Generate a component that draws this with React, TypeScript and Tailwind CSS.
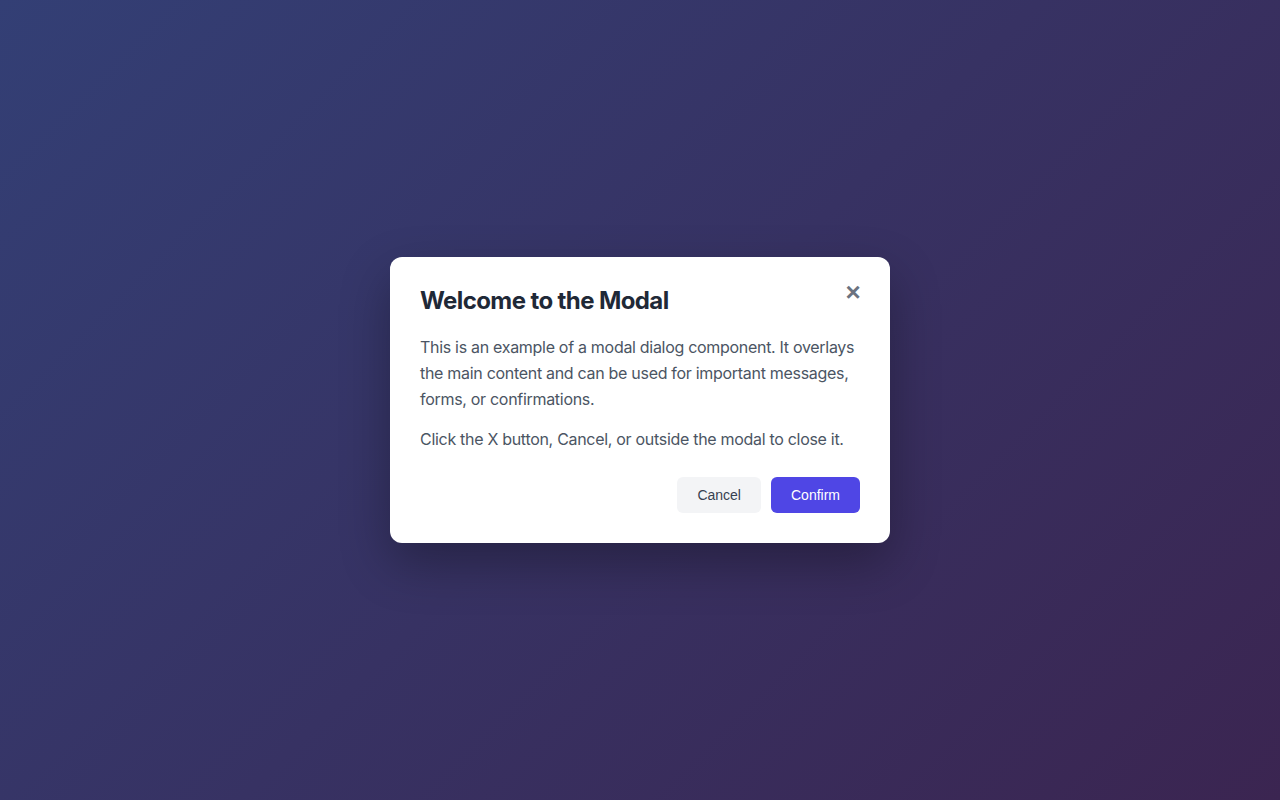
import React from 'react';

const App: React.FC = () => {
  return (
    <div className="min-h-screen w-full bg-[linear-gradient(135deg,#333f75_0%,#3b2551_100%)] flex items-center justify-center font-['Inter',sans-serif]">
      <div className="relative w-[500px] bg-white rounded-xl p-[30px] shadow-[0_20px_50px_rgba(0,0,0,0.3)]">
        <button className="absolute top-[19px] right-[21px] w-8 h-8 flex items-center justify-center text-[#6b7280] text-[26px] font-bold leading-none font-['Liberation_Sans',sans-serif]">
          ×
        </button>
        <h2 className="text-2xl font-bold text-[#1f2937] leading-[32px] tracking-[-0.6px] mt-[-2px]">Welcome to the Modal</h2>
        <div className="mt-[18px] text-base leading-[1.6] tracking-[-0.3px] text-[#4b5563]">
          <p>
            This is an example of a modal dialog component. It overlays the main content and can be used for important messages, forms, or confirmations.
          </p>
          <p className="mt-[15px]">Click the X button, Cancel, or outside the modal to close it.</p>
        </div>
        <div className="mt-[24px] flex justify-end gap-[10px] font-['Liberation_Sans',sans-serif] text-sm">
          <button className="h-9 px-5 rounded-md bg-[#f3f4f6] text-[#374151]">Cancel</button>
          <button className="h-9 px-5 rounded-md bg-[#4f46e5] text-white">Confirm</button>
        </div>
      </div>
    </div>
  );
};

export default App;
